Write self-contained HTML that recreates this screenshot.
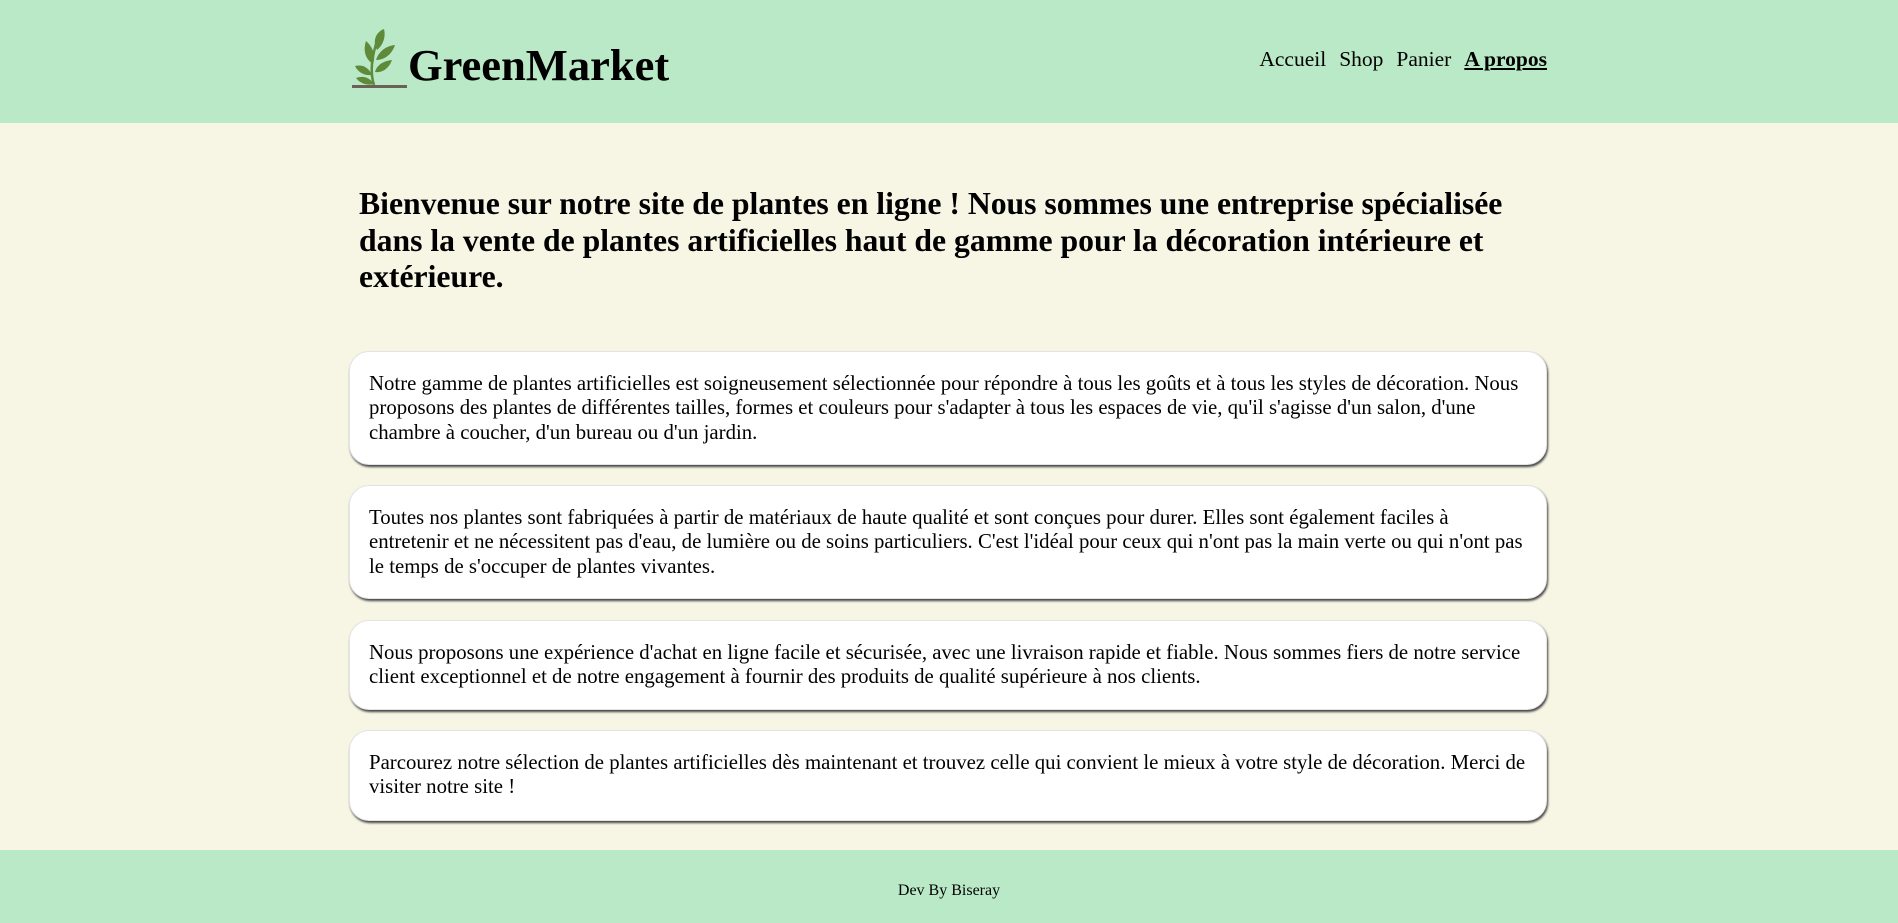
<!DOCTYPE html>
<html><head><meta charset="utf-8"><style>
*{margin:0;padding:0;box-sizing:border-box}
body{width:1898px;height:923px;background:#f7f5e4;font-family:"Liberation Serif",serif;color:#000;position:relative;overflow:hidden}
header{position:absolute;left:0;top:0;width:1898px;height:123px;background:#b9e9c6}
.logo{position:absolute;left:350px;top:28px}
.brand{position:absolute;left:408px;top:37px;font-size:44.5px;font-weight:bold;line-height:56px}
nav{position:absolute;right:351px;top:46px;font-size:21.5px;line-height:26px}
nav a{color:#000;text-decoration:none;margin-left:13px}
nav a.on{font-weight:bold;text-decoration:underline}
h1{position:absolute;left:359px;top:186px;width:1172px;font-size:31.7px;line-height:36.5px;font-weight:bold}
.card{position:absolute;left:349px;width:1198px;background:#fff;border-radius:20px;box-shadow:1px 2px 2px #444;border:1px solid #e4e4e4;padding:20px 20px 20px 19px;font-size:20.8px;line-height:24.3px}
footer{position:absolute;left:0;top:850px;width:1898px;height:73px;background:#b9e9c6;text-align:center;font-size:16px;line-height:20px;padding-top:31px}
</style></head><body>
<header>
<svg class="logo" width="62" height="62" viewBox="0 0 62 62">
<path d="M24 57 C20 45 21 30 28 10" stroke="#5e8a3a" stroke-width="2.5" fill="none"/>
<path d="M27 22 C22 13 26 4 34 1 C36 9 33 17 27 22Z" fill="#5e8a3a"/>
<path d="M26 32 C29 23 36 18 45 17 C42 26 35 32 26 32Z" fill="#5e8a3a"/>
<path d="M23 36 C15 31 13 22 16 13 C23 19 26 28 23 36Z" fill="#5e8a3a"/>
<path d="M25 44 C27 37 33 33 42 32 C39 40 33 45 25 44Z" fill="#5e8a3a"/>
<path d="M22 47 C14 48 8 44 5 38 C13 36 19 40 22 47Z" fill="#5e8a3a"/>
<path d="M24 56 C16 58 10 55 6 50 C14 47 20 50 24 56Z" fill="#5e8a3a"/>
<rect x="2" y="57" width="55" height="3" fill="#6b6157"/>
</svg>
<div class="brand">GreenMarket</div>
<nav><a>Accueil</a><a>Shop</a><a>Panier</a><a class="on">A propos</a></nav>
</header>
<h1>Bienvenue sur notre site de plantes en ligne ! Nous sommes une entreprise spécialisée dans la vente de plantes artificielles haut de gamme pour la décoration intérieure et extérieure.</h1>
<div class="card" style="top:351px;height:114px">Notre gamme de plantes artificielles est soigneusement sélectionnée pour répondre à tous les goûts et à tous les styles de décoration. Nous proposons des plantes de différentes tailles, formes et couleurs pour s'adapter à tous les espaces de vie, qu'il s'agisse d'un salon, d'une chambre à coucher, d'un bureau ou d'un jardin.</div>
<div class="card" style="top:485px;height:114px">Toutes nos plantes sont fabriquées à partir de matériaux de haute qualité et sont conçues pour durer. Elles sont également faciles à entretenir et ne nécessitent pas d'eau, de lumière ou de soins particuliers. C'est l'idéal pour ceux qui n'ont pas la main verte ou qui n'ont pas le temps de s'occuper de plantes vivantes.</div>
<div class="card" style="top:620px;height:90px">Nous proposons une expérience d'achat en ligne facile et sécurisée, avec une livraison rapide et fiable. Nous sommes fiers de notre service client exceptionnel et de notre engagement à fournir des produits de qualité supérieure à nos clients.</div>
<div class="card" style="top:730px;height:91px">Parcourez notre sélection de plantes artificielles dès maintenant et trouvez celle qui convient le mieux à votre style de décoration. Merci de visiter notre site !</div>
<footer>Dev By Biseray</footer>
</body></html>
